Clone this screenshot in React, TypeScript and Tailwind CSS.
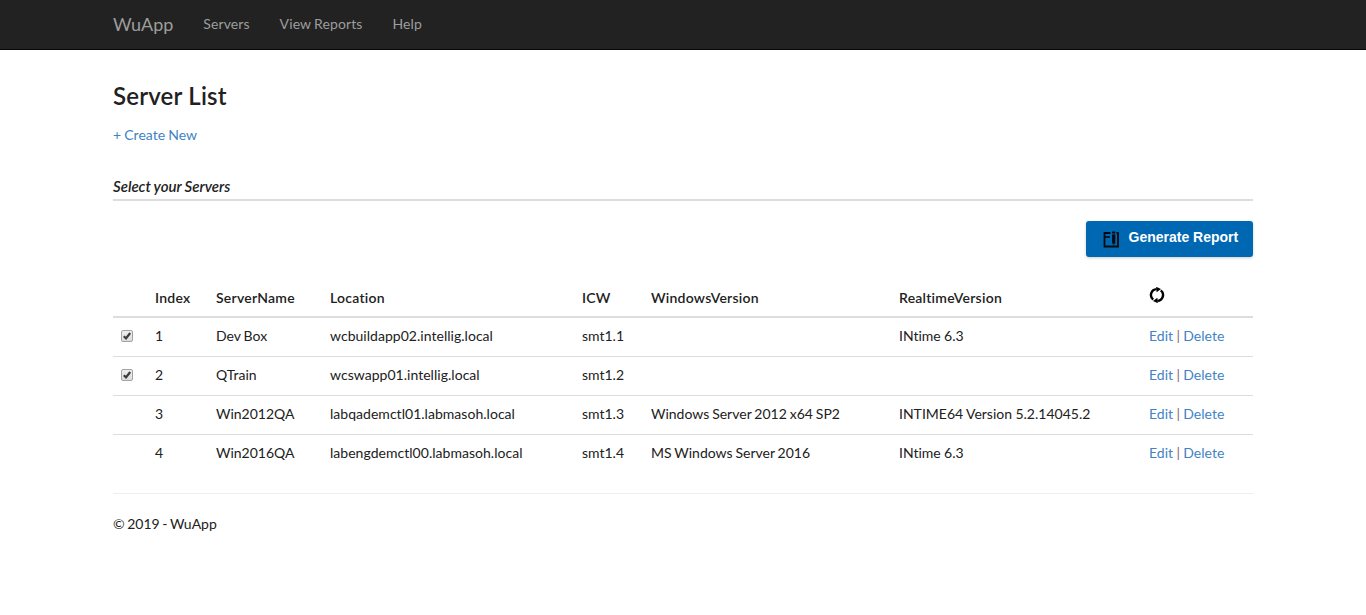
import { useState } from "react";

type Server = {
  index: number;
  name: string;
  location: string;
  icw: string;
  windows: string;
  realtime: string;
  selectable: boolean;
};

const servers: Server[] = [
  { index: 1, name: "Dev Box", location: "wcbuildapp02.intellig.local", icw: "smt1.1", windows: "", realtime: "INtime 6.3", selectable: true },
  { index: 2, name: "QTrain", location: "wcswapp01.intellig.local", icw: "smt1.2", windows: "", realtime: "", selectable: true },
  { index: 3, name: "Win2012QA", location: "labqademctl01.labmasoh.local", icw: "smt1.3", windows: "Windows Server 2012 x64 SP2", realtime: "INTIME64 Version 5.2.14045.2", selectable: false },
  { index: 4, name: "Win2016QA", location: "labengdemctl00.labmasoh.local", icw: "smt1.4", windows: "MS Windows Server 2016", realtime: "INtime 6.3", selectable: false },
];

const columns = "grid grid-cols-[34px_61px_114px_252px_69px_248px_250px_112px]";

function Checkbox() {
  const [checked, setChecked] = useState(true);
  return (
    <button
      type="button"
      role="checkbox"
      aria-checked={checked}
      aria-label="Select server"
      onClick={() => setChecked(!checked)}
      className="mt-[4px] block size-3 rounded-[2px] border border-[#a3a3a3] bg-linear-to-b from-[#eeeeee] to-[#dddddd]"
    >
      {checked && (
        <svg viewBox="0 0 10 10" className="block size-[10px]">
          <path d="M1.8 5.3 4 7.4 8.2 2" fill="none" stroke="#3b3b3b" strokeWidth="2.2" />
        </svg>
      )}
    </button>
  );
}

function ReportIcon() {
  return (
    <svg viewBox="0 0 16 17" className="h-[17px] w-4" fill="none" stroke="#060a0e">
      <path d="M7.5 2H1.5v13.5h13.5V2h-1.5" strokeWidth="1.8" />
      <path d="M2 6h5" strokeWidth="1.6" />
      <path d="M10.7 0.5v2" strokeWidth="3.2" />
      <path d="M10.7 3.4v9" strokeWidth="3.2" />
      <path d="M10.7 12.2v1.4" strokeWidth="1.6" />
    </svg>
  );
}

function RefreshIcon() {
  return (
    <svg viewBox="0 0 16 16" className="-mt-px block size-4">
      <path d="M4.2 12.6A5.9 5.9 0 0 1 7.6 2.1M11.8 3.4A5.9 5.9 0 0 1 8.4 13.9" fill="none" stroke="#000" strokeWidth="2.4" />
      <path d="M7.2 -0.2 12 2 7.6 5.2ZM8.8 16.2 4 14 8.4 10.8Z" fill="#000" />
    </svg>
  );
}

export default function App() {
  return (
    <div className="min-h-[615px] bg-white font-['Lato',sans-serif] text-sm leading-5 text-[#212121] [font-variant-ligatures:none]">
      <nav className="h-[50px] border-b border-[#080808] bg-[#222222] text-[#9d9d9d]">
        <div className="mx-auto flex h-12 w-[1140px] items-center">
          <a href="#" className="mr-[30px] text-lg leading-5">WuApp</a>
          <div className="flex gap-[30px] tracking-[0.1px]">
            <a href="#">Servers</a>
            <a href="#" className="[word-spacing:-0.5px]">View Reports</a>
            <a href="#">Help</a>
          </div>
        </div>
      </nav>
      <main className="mx-auto w-[1140px]">
        <h2 className="pt-[33px] text-2xl leading-[26px] font-semibold tracking-[0.2px]">Server List</h2>
        <p className="mt-4"><a href="#" className="text-[#4183c4] [word-spacing:-0.4px]">+ Create New</a></p>
        <h4 className="mt-8 h-[24px] border-b-2 border-[#dddddd] text-[15px] leading-[18px] font-semibold italic [word-spacing:-0.3px]">Select your Servers</h4>
        <div className="mt-5 flex justify-end">
          <button type="button" className="flex h-9 w-[167px] items-center rounded-[3px] bg-[#0067b3] pl-[17px] font-['Liberation_Sans',sans-serif] text-sm leading-4 font-bold text-white shadow-[0_1px_3px_rgba(0,0,0,0.2)]">
            <ReportIcon />
            <span className="mb-1 ml-[9.5px] whitespace-nowrap">Generate Report</span>
          </button>
        </div>
        <div className="mt-[23px]">
          <div className={`${columns} h-[38px] border-b-2 border-[#dddddd] pt-2 font-semibold tracking-[0.24px] *:px-2`}>
            <span />
            <span>Index</span>
            <span>ServerName</span>
            <span>Location</span>
            <span>ICW</span>
            <span>WindowsVersion</span>
            <span>RealtimeVersion</span>
            <span><RefreshIcon /></span>
          </div>
          {servers.map((s) => (
            <div key={s.index} className={`${columns} h-[39px] border-b border-[#dddddd] pt-2 [word-spacing:-0.7px] last:border-transparent *:px-2`}>
              <span>{s.selectable && <Checkbox />}</span>
              <span>{s.index}</span>
              <span>{s.name}</span>
              <span className="tracking-[0.03px]">{s.location}</span>
              <span>{s.icw}</span>
              <span>{s.windows}</span>
              <span className="[word-spacing:-0.2px]">{s.realtime}</span>
              <span className="whitespace-nowrap [word-spacing:-0.2px]">
                <a href="#" className="text-[#4183c4]">Edit</a> <span className="text-[#8b6378]">|</span> <a href="#" className="text-[#4183c4]">Delete</a>
              </span>
            </div>
          ))}
        </div>
        <hr className="mt-[19px] border-[#eeeeee]" />
        <footer className="mt-5 [word-spacing:-1px]">© 2019 - WuApp</footer>
      </main>
    </div>
  );
}
